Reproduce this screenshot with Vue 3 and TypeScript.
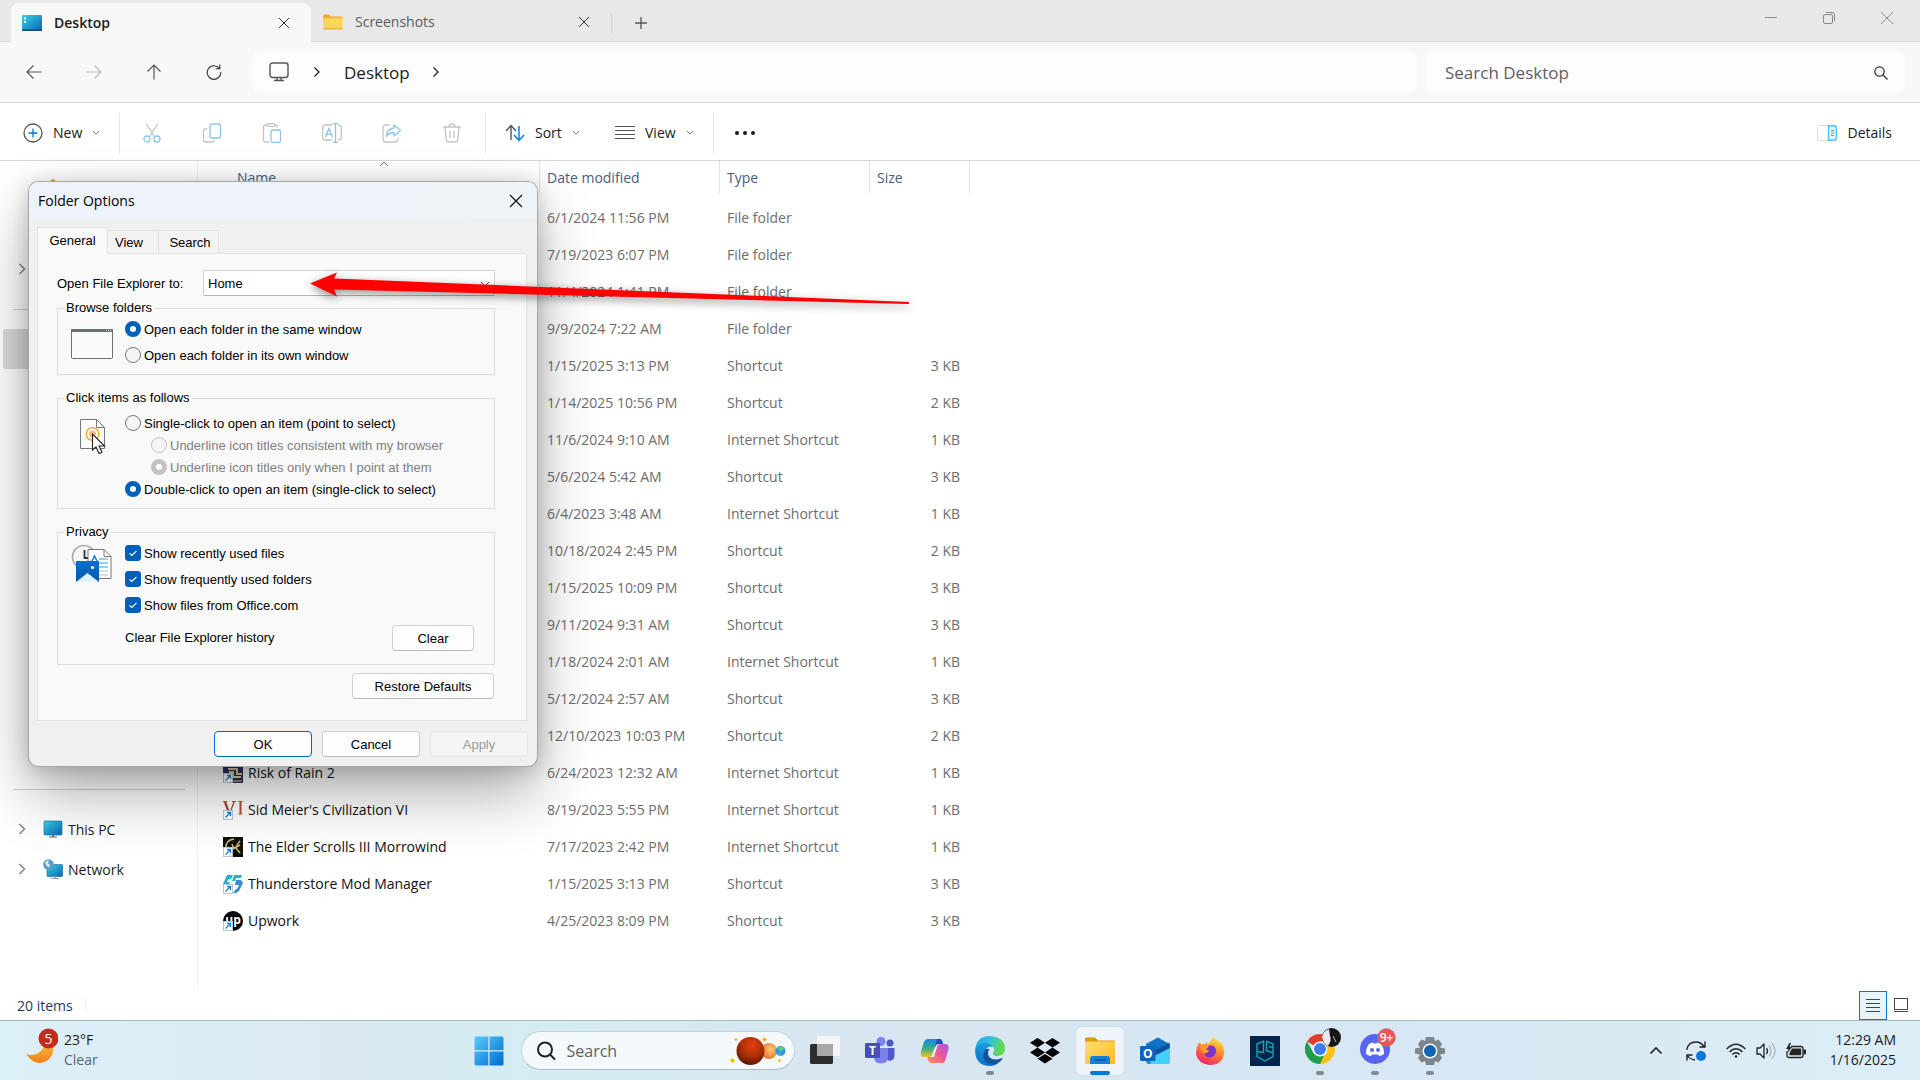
<script setup lang="ts">
import { ref } from 'vue'

interface FileRow {
  name?: string
  icon?: string
  date: string
  type: string
  size: string
}

const F = 'File folder'
const S = 'Shortcut'
const I = 'Internet Shortcut'

const rows: FileRow[] = [
  { date: '6/1/2024 11:56 PM', type: F, size: '' },
  { date: '7/19/2023 6:07 PM', type: F, size: '' },
  { date: '11/4/2024 1:41 PM', type: F, size: '' },
  { date: '9/9/2024 7:22 AM', type: F, size: '' },
  { date: '1/15/2025 3:13 PM', type: S, size: '3 KB' },
  { date: '1/14/2025 10:56 PM', type: S, size: '2 KB' },
  { date: '11/6/2024 9:10 AM', type: I, size: '1 KB' },
  { date: '5/6/2024 5:42 AM', type: S, size: '3 KB' },
  { date: '6/4/2023 3:48 AM', type: I, size: '1 KB' },
  { date: '10/18/2024 2:45 PM', type: S, size: '2 KB' },
  { date: '1/15/2025 10:09 PM', type: S, size: '3 KB' },
  { date: '9/11/2024 9:31 AM', type: S, size: '3 KB' },
  { date: '1/18/2024 2:01 AM', type: I, size: '1 KB' },
  { date: '5/12/2024 2:57 AM', type: S, size: '3 KB' },
  { date: '12/10/2023 10:03 PM', type: S, size: '2 KB' },
  { name: 'Risk of Rain 2', icon: 'ror', date: '6/24/2023 12:32 AM', type: I, size: '1 KB' },
  { name: "Sid Meier's Civilization VI", icon: 'civ', date: '8/19/2023 5:55 PM', type: I, size: '1 KB' },
  { name: 'The Elder Scrolls III Morrowind', icon: 'tes', date: '7/17/2023 2:42 PM', type: I, size: '1 KB' },
  { name: 'Thunderstore Mod Manager', icon: 'thunder', date: '1/15/2025 3:13 PM', type: S, size: '3 KB' },
  { name: 'Upwork', icon: 'upwork', date: '4/25/2023 8:09 PM', type: S, size: '3 KB' },
]

const openTo = ref('Home')
const browse = ref('same')
const click = ref('double')
const underline = ref('point')
const privacy = ref([
  { id: 'p-recent', label: 'Show recently used files', on: true },
  { id: 'p-frequent', label: 'Show frequently used folders', on: true },
  { id: 'p-office', label: 'Show files from Office.com', on: true },
])
</script>

<template>
  <div class="screen">
    <header class="tabbar">
      <div class="tab active">
        <svg class="tab-icon" width="20" height="16" viewBox="0 0 20 16">
          <defs>
            <linearGradient id="desk" x1="0" y1="0" x2="1" y2="1">
              <stop offset="0" stop-color="#35d3e3" /><stop offset="1" stop-color="#0a63b8" />
            </linearGradient>
          </defs>
          <rect width="20" height="16" rx="1" fill="url(#desk)" />
          <rect y="14.500" width="20" height="1.500" fill="#0b4a80" />
          <path d="M2 2.500h2v2H2zM2 6h2v2H2z" fill="#fff" />
        </svg>
        <span class="tab-title">Desktop</span>
        <button class="plain x" aria-label="Close tab">
          <svg width="12" height="12" viewBox="0 0 12 12"><path d="M1 1l10 10M11 1L1 11" stroke="#333" fill="none" /></svg>
        </button>
      </div>
      <div class="tab">
        <svg class="tab-icon" width="20" height="16" viewBox="0 0 20 16">
          <path d="M0 2q0-1.500 1.500-1.500h4.500L8 2.500h10.500q1 0 1 1V6H0z" fill="#f2b01c" />
          <rect y="4" width="19.500" height="11" rx="1" fill="#ffd65c" />
          <path d="M0 14h19.500v.500q0 1-1 1H1q-1 0-1-1z" fill="#eeb33a" />
        </svg>
        <span class="tab-title">Screenshots</span>
        <button class="plain x" aria-label="Close tab">
          <svg width="12" height="12" viewBox="0 0 12 12"><path d="M1 1l10 10M11 1L1 11" stroke="#333" fill="none" /></svg>
        </button>
      </div>
      <button class="plain new-tab" aria-label="New tab">
        <svg width="14" height="14" viewBox="0 0 14 14"><path d="M7 1v12M1 7h12" stroke="#555" stroke-width="1.300" /></svg>
      </button>
      <div class="win-buttons">
        <button class="plain" aria-label="Minimize"><svg width="14" height="14" viewBox="0 0 14 14"><path d="M1 6.500h12" stroke="#8a8a8a" /></svg></button>
        <button class="plain" aria-label="Restore"><svg width="14" height="14" viewBox="0 0 14 14" fill="none" stroke="#8a8a8a"><rect x="1.500" y="3.500" width="9" height="9" rx="1.500" /><path d="M4 1.500h6q2.500 0 2.500 2.500v6" /></svg></button>
        <button class="plain" aria-label="Close"><svg width="14" height="14" viewBox="0 0 14 14"><path d="M1 1l12 12M13 1L1 13" stroke="#8a8a8a" /></svg></button>
      </div>
    </header>

    <div class="navbar">
      <div class="nav-buttons">
        <button class="plain" aria-label="Back"><svg width="16" height="16" viewBox="0 0 16 16" fill="none" stroke="#555" stroke-width="1.200"><path d="M15.500 8H1M7.500 1.500L1 8l6.500 6.500" /></svg></button>
        <button class="plain" aria-label="Forward" disabled><svg width="16" height="16" viewBox="0 0 16 16" fill="none" stroke="#bbb" stroke-width="1.200"><path d="M.500 8H15M8.500 1.500L15 8l-6.500 6.500" /></svg></button>
        <button class="plain" aria-label="Up"><svg width="16" height="16" viewBox="0 0 16 16" fill="none" stroke="#555" stroke-width="1.200"><path d="M8 15.500V1M1.500 7.500L8 1l6.500 6.500" /></svg></button>
        <button class="plain" aria-label="Refresh"><svg width="16" height="16" viewBox="0 0 16 16" fill="none" stroke="#333" stroke-width="1.100"><path d="M13.500 4.500A6.800 6.800 0 1 0 14.800 8M13.800.500v4.300H9.500" /></svg></button>
      </div>
      <div class="address">
        <svg width="20" height="20" viewBox="0 0 20 20" fill="none" stroke="#555" stroke-width="1.400"><rect x="1" y="1" width="18" height="14.500" rx="2.500" /><path d="M8 15.500v3M12 15.500v3M5 18.500h10" /></svg>
        <svg class="crumb" width="8" height="12" viewBox="0 0 8 12"><path d="M1.500 1.500L6 6l-4.500 4.500" fill="none" stroke="#222" stroke-width="1.300" /></svg>
        <a class="crumb-link" href="#">Desktop</a>
        <svg width="8" height="12" viewBox="0 0 8 12"><path d="M1.500 1.500L6 6l-4.500 4.500" fill="none" stroke="#222" stroke-width="1.300" /></svg>
      </div>
      <div class="searchbox">
        <input type="text" placeholder="Search Desktop" aria-label="Search Desktop" />
        <svg width="14" height="14" viewBox="0 0 14 14" fill="none" stroke="#333" stroke-width="1.200"><circle cx="5.500" cy="5.500" r="4.700" /><path d="M9 9l4.500 4.500" /></svg>
      </div>
    </div>

    <div class="toolbar">
      <button class="plain cmd new">
        <svg width="20" height="20" viewBox="0 0 20 20" fill="none"><circle cx="10" cy="10" r="9" stroke="#555" stroke-width="1.300" /><path d="M10 5.500v9M5.500 10h9" stroke="#0078d4" stroke-width="1.300" /></svg>
        <span>New</span>
        <svg width="8" height="6" viewBox="0 0 8 6"><path d="M1 1l3 3 3-3" fill="none" stroke="#777" /></svg>
      </button>
      <div class="icon-group">
        <button class="plain" aria-label="Cut" disabled><svg width="20" height="20" viewBox="0 0 20 20" fill="none" stroke-width="1.300"><path d="M4 .500l8.500 13M16 .500L7.500 13.500" stroke="#c4c4c4" /><circle cx="5" cy="16" r="3" stroke="#8cc4ef" /><circle cx="15" cy="16" r="3" stroke="#8cc4ef" /></svg></button>
        <button class="plain" aria-label="Copy" disabled><svg width="20" height="20" viewBox="0 0 20 20" fill="none" stroke-width="1.300"><path d="M5 6H4Q1.500 6 1.500 8.500v8Q1.500 19 4 19h6q2 0 2.500-2" stroke="#c4c4c4" /><rect x="8" y="1" width="10.500" height="14" rx="2" stroke="#8cc4ef" /></svg></button>
        <button class="plain" aria-label="Paste" disabled><svg width="20" height="20" viewBox="0 0 20 20" fill="none" stroke-width="1.300"><path d="M5 2H3.500Q1.500 2 1.500 4v13q0 2 2 2H7M13 2q2.500 0 2.500 2.500" stroke="#c4c4c4" /><rect x="5" y=".700" width="8" height="2.600" rx="1.300" stroke="#c4c4c4" /><rect x="9" y="7" width="9.500" height="12.300" rx="1.500" stroke="#8cc4ef" /></svg></button>
        <button class="plain" aria-label="Rename" disabled><svg width="20" height="20" viewBox="0 0 20 20" fill="none" stroke-width="1.300"><path d="M10 2H3Q.700 2 .700 4.500v10Q.700 17 3 17h7M16 2q3.300 0 3.300 3v9q0 3-3.300 3" stroke="#c4c4c4" /><path d="M3.500 14L7 5.500 10.500 14M4.800 11.300h4.500M11 .700h5M13.500.700v18.600M11 19.300h5" stroke="#8cc4ef" /></svg></button>
        <button class="plain" aria-label="Share" disabled><svg width="20" height="20" viewBox="0 0 20 20" fill="none" stroke-width="1.300"><path d="M8 2H4Q1 2 1 5v11q0 3 3 3h9q3 0 3-3v-1" stroke="#c4c4c4" /><path d="M12 2l6.500 5.500L12 13v-3.500q-5 0-7.500 4 .500-8 7.500-8.500z" stroke="#8cc4ef" stroke-linejoin="round" /></svg></button>
        <button class="plain" aria-label="Delete" disabled><svg width="20" height="20" viewBox="0 0 20 20" fill="none" stroke="#c4c4c4" stroke-width="1.300"><path d="M1 4h18M7 4q0-3 3-3t3 3M3 4l1.300 13q.200 2 2 2h7.400q1.800 0 2-2L17 4M8 8v7M12 8v7" /></svg></button>
      </div>
      <button class="plain cmd sort">
        <svg width="20" height="18" viewBox="0 0 20 18" fill="none" stroke-width="1.400"><path d="M6 16V2M1 7l5-5.500L11 7" stroke="#555" /><path d="M14 2v14M9 11l5 5.500 5-5.500" stroke="#0078d4" /></svg>
        <span>Sort</span>
        <svg width="8" height="6" viewBox="0 0 8 6"><path d="M1 1l3 3 3-3" fill="none" stroke="#777" /></svg>
      </button>
      <button class="plain cmd view">
        <svg width="20" height="14" viewBox="0 0 20 14" stroke="#555"><path d="M0 .500h20M0 4.500h20M0 8.500h20M0 12.500h20" stroke-width="1.200" /></svg>
        <span>View</span>
        <svg width="8" height="6" viewBox="0 0 8 6"><path d="M1 1l3 3 3-3" fill="none" stroke="#777" /></svg>
      </button>
      <button class="plain more" aria-label="See more">
        <svg width="20" height="4" viewBox="0 0 20 4" fill="#1a1a1a"><circle cx="2" cy="2" r="2" /><circle cx="10" cy="2" r="2" /><circle cx="18" cy="2" r="2" /></svg>
      </button>
      <button class="plain cmd details">
        <svg width="20" height="16" viewBox="0 0 20 16" fill="none"><rect x=".500" y=".500" width="19" height="15" rx="2.500" stroke="#ddd" /><path d="M11.500.700H17q2.400 0 2.400 2.400v9.800q0 2.400-2.400 2.400h-5.500z" fill="#e3f5ff" stroke="#4cc2ff" stroke-width="1.400" /><path d="M14 5.500h3M14 8h3M14 10.500h3" stroke="#2ba7e8" /></svg>
        <span>Details</span>
      </button>
    </div>

    <main class="body">
      <nav class="sidebar">
        <div class="side-row home">
          <svg width="20" height="20" viewBox="0 0 20 20"><path d="M10 0l10 8h-3v12H3V8H0z" fill="#f08a24" /></svg>
        </div>
        <div class="side-row" />
        <div class="side-row">
          <svg class="expand" width="8" height="12" viewBox="0 0 8 12"><path d="M1.500 1L6.500 6l-5 5" fill="none" stroke="#868686" stroke-width="1.500" /></svg>
        </div>
        <div class="side-row rule" />
        <div class="side-row selected" />
        <div class="side-fill" />
        <div class="side-row rule" />
        <a class="side-row" href="#">
          <svg class="expand" width="8" height="12" viewBox="0 0 8 12"><path d="M1.500 1L6.500 6l-5 5" fill="none" stroke="#868686" stroke-width="1.500" /></svg>
          <svg width="20" height="18" viewBox="0 0 20 18">
            <rect x="1" y="1" width="18" height="14" rx="1" fill="url(#desk)" stroke="#14639b" stroke-width=".600" />
            <path d="M9 15h2v1.500h3v1H6v-1h3z" fill="#5d7180" />
          </svg>
          <span>This PC</span>
        </a>
        <a class="side-row" href="#">
          <svg class="expand" width="8" height="12" viewBox="0 0 8 12"><path d="M1.500 1L6.500 6l-5 5" fill="none" stroke="#868686" stroke-width="1.500" /></svg>
          <svg width="20" height="20" viewBox="0 0 20 20">
            <rect x="4" y="5.500" width="15.700" height="12" rx="1" fill="url(#desk)" stroke="#14639b" stroke-width=".600" />
            <path d="M11 17.500h2V19h3v1H8v-1h3z" fill="#9aa7b0" />
            <circle cx="5.500" cy="5.500" r="5.300" fill="#5c9cc4" />
            <path d="M2 3q2-2 4-1.500L5 4l2 2-1 2.500L3.500 7z" fill="#d6e9f3" />
          </svg>
          <span>Network</span>
        </a>
      </nav>
      <section class="files">
        <svg class="sort-mark" width="10" height="6" viewBox="0 0 10 6"><path d="M1 5l4-4 4 4" fill="none" stroke="#666" /></svg>
        <table>
          <colgroup><col class="c-name" /><col class="c-date" /><col class="c-type" /><col class="c-size" /></colgroup>
          <thead>
            <tr><th class="name">Name</th><th>Date modified</th><th>Type</th><th>Size</th></tr>
          </thead>
          <tbody>
            <tr v-for="(r, i) in rows" :key="i">
              <td class="name">
                <div v-if="r.name" class="file">
                  <svg width="20" height="20" viewBox="0 0 20 20">
                    <g v-if="r.icon === 'ror'">
                      <rect width="20" height="20" fill="#2f2f5c" />
                      <path d="M5 6h9v5h5M10 10v4h8M6 9h5" stroke="#d9cf9a" stroke-width="2" fill="none" />
                      <path d="M10 18h9" stroke="#d9cf9a" fill="none" />
                    </g>
                    <g v-else-if="r.icon === 'civ'" fill="none" stroke="#a5532f">
                      <path d="M2 2l4.500 12" stroke-width="2.400" /><path d="M6.500 14L11 2" stroke-width="1.300" /><path d="M17.500 2v12" stroke-width="2" />
                      <path d="M0 1.500h4M9 1.500h4M15.500 1.500h4M15.500 14h4" />
                    </g>
                    <g v-else-if="r.icon === 'tes'">
                      <rect width="20" height="20" fill="#120e08" />
                      <path d="M11 2Q2 3 3 12M9 7q1 4 4 4M17 4q-3 3-4 7l4 5M10 12l7-4" fill="none" stroke="#d2ba78" stroke-width="1.500" />
                    </g>
                    <g v-else-if="r.icon === 'thunder'">
                      <path d="M4 1h6L8 5H5.500L4 8h3l-1 2H0zM11 1h8l-1 3h-5l-1 3h-3z" fill="#22b4cc" />
                      <path d="M13 6h5l2 3-4 8-3 2h-3l3-4h1l2-4h-4z" fill="#3590c8" />
                    </g>
                    <g v-else>
                      <circle cx="10" cy="10" r="10" fill="#000" />
                      <text x="10" y="13" text-anchor="middle" font-size="12" font-weight="700" fill="#fff" font-family="Open Sans, sans-serif">up</text>
                    </g>
                    <rect x=".500" y="10.500" width="9" height="9" fill="#fff" stroke="#b9c7dc" />
                    <path d="M2.500 17.500l5-5M4 12.500h3.500V16" fill="none" stroke="#1a7fd0" stroke-width="1.300" />
                  </svg>
                  <span>{{ r.name }}</span>
                </div>
              </td>
              <td>{{ r.date }}</td>
              <td>{{ r.type }}</td>
              <td class="size">{{ r.size }}</td>
            </tr>
          </tbody>
        </table>
      </section>
    </main>

    <div class="statusbar">
      <span class="count">20 items</span>
      <div class="view-toggle">
        <button class="plain on" aria-label="Details view"><svg width="14" height="14" viewBox="0 0 14 14" stroke="#444"><path d="M0 1.500h14M0 5.500h14M0 9.500h14M0 13.500h14" /></svg></button>
        <button class="plain" aria-label="Large icons"><svg width="14" height="14" viewBox="0 0 14 14" stroke="#444" fill="none"><rect x=".500" y=".500" width="13" height="11" /><path d="M0 13.500h14" /></svg></button>
      </div>
    </div>

    <footer class="taskbar">
      <div class="weather">
        <svg width="32" height="38" viewBox="0 0 32 38">
          <defs><linearGradient id="moon" x1="0" y1="0" x2="0" y2="1"><stop offset="0" stop-color="#f9bf3c" /><stop offset="1" stop-color="#ef7d18" /></linearGradient></defs>
          <path d="M0 26q14 4 19-10h8q2 10-5 16-12 8-22-6z" fill="url(#moon)" />
          <circle cx="22.500" cy="10.500" r="10" fill="#c42b1c" />
          <text x="22.500" y="15.500" text-anchor="middle" font-size="14" fill="#fff" font-family="Open Sans, sans-serif">5</text>
        </svg>
        <div class="two-lines"><span>23°F</span><span class="dim">Clear</span></div>
      </div>

      <div class="center">
        <button class="plain start" aria-label="Start">
          <svg width="30" height="30" viewBox="0 0 30 30">
            <defs><linearGradient id="win" x1="0" y1="0" x2="1" y2="1"><stop offset="0" stop-color="#57cdfb" /><stop offset="1" stop-color="#0069cf" /></linearGradient></defs>
            <path d="M2 .500h12.300v13.800H.500V2Q.500.500 2 .500zM15.500.500H28Q29.500.500 29.500 2v12.300h-14zM.500 15.500h13.800v14H2q-1.500 0-1.500-1.500zM15.500 15.500h14V28q0 1.500-1.500 1.500H15.500z" fill="url(#win)" />
          </svg>
        </button>
        <div class="task-search">
          <svg width="20" height="20" viewBox="0 0 20 20" fill="none" stroke="#222" stroke-width="2"><circle cx="9" cy="8.500" r="7" /><path d="M14 13.500l4.500 4.500" stroke-linecap="round" /></svg>
          <input type="text" placeholder="Search" aria-label="Search" />
          <svg width="56" height="30" viewBox="0 0 56 30">
            <defs>
              <radialGradient id="mars" cx=".550" cy=".300" r=".700"><stop offset="0" stop-color="#e2420b" /><stop offset=".600" stop-color="#a92d06" /><stop offset="1" stop-color="#5b1402" /></radialGradient>
              <radialGradient id="venus" cx=".600" cy=".400" r=".600"><stop offset="0" stop-color="#ffc976" /><stop offset="1" stop-color="#e2782e" /></radialGradient>
            </defs>
            <circle cx="39" cy="15" r="8" fill="url(#venus)" />
            <circle cx="50.500" cy="15" r="5" fill="#2f97e6" />
            <path d="M49 10.500q4 0 5 2l-3 3-3-2zM48 17l3 1-1 2z" fill="#5fcf73" />
            <circle cx="20.500" cy="15" r="14" fill="url(#mars)" />
            <path d="M34.500 1l.800 1.700 1.700.800-1.700.800-.800 1.700-.800-1.700-1.700-.800 1.700-.800zM2.500 22l.900 1.600 1.600.900-1.600.900-.900 1.600-.900-1.600L0 24.500l1.600-.900zM6 2l.500 1 1 .500-1 .500L6 5l-.500-1-1-.500 1-.500zM49.500 23l.500 1 1 .500-1 .500-.500 1-.500-1-1-.500 1-.500z" fill="#f1b51c" stroke="#f1b51c" stroke-width=".600" />
          </svg>
        </div>

        <button class="app" aria-label="Task view">
          <svg width="30" height="30" viewBox="0 0 30 30">
            <rect x="0" y="8" width="23" height="20" rx="1.500" fill="#2d2d2d" />
            <rect x="7" y="0" width="23" height="20" rx="1.500" fill="#f5f5f5" />
            <path d="M7 8h16v12H8.500Q7 20 7 18.500z" fill="#a8a8a8" />
          </svg>
        </button>
        <button class="app" aria-label="Teams">
          <svg width="30" height="30" viewBox="0 0 30 30">
            <circle cx="25" cy="7" r="3.500" fill="#5059c9" /><path d="M20 12h9.500v7.500a4.500 4.500 0 0 1-9.500 1z" fill="#5059c9" />
            <circle cx="16" cy="5.500" r="4.500" fill="#7b83eb" /><path d="M9 12h14v9q0 6.500-7 6.500T9 21z" fill="#7b83eb" />
            <rect x="0" y="7" width="15" height="15" rx="1.200" fill="#464eb8" />
            <text x="7.500" y="19" text-anchor="middle" font-size="12" font-weight="700" fill="#fff" font-family="Open Sans, sans-serif">T</text>
          </svg>
        </button>
        <button class="app" aria-label="Copilot">
          <svg width="30" height="30" viewBox="0 0 30 30">
            <defs>
              <linearGradient id="cpa" x1="0" y1="0" x2="0" y2="1"><stop offset="0" stop-color="#1888e0" /><stop offset=".500" stop-color="#2fae8d" /><stop offset="1" stop-color="#f2c21c" /></linearGradient>
              <linearGradient id="cpb" x1="1" y1="0" x2="0" y2="1"><stop offset="0" stop-color="#a65af0" /><stop offset=".500" stop-color="#f05694" /><stop offset="1" stop-color="#ff9456" /></linearGradient>
            </defs>
            <path d="M8 3h11q3 0 4 5h-5q-2 0-3 4l-2 6q-1 3-3 3H4q-4 0-3-5L3.500 7Q5 3 8 3z" fill="url(#cpa)" />
            <path d="M17 3h3q2 0 3 5h-5q-2 0-3 3z" fill="#1a4ec2" />
            <path d="M22 27H12q-4 0-4.500-6H12q2 0 3-4l2-6q1-3 4-3h4q4.500 0 3.500 5L26 22q-1 5-4 5z" fill="url(#cpb)" />
            <path d="M15 11h2l-3 10h-3z" fill="#dcebf4" />
          </svg>
        </button>
        <button class="app open" aria-label="Edge">
          <svg width="30" height="30" viewBox="0 0 30 30">
            <defs>
              <linearGradient id="eda" x1="0" y1="0" x2="1" y2=".300"><stop offset="0" stop-color="#1ba0dd" /><stop offset=".500" stop-color="#2fc2df" /><stop offset="1" stop-color="#66d84b" /></linearGradient>
              <linearGradient id="edb" x1="0" y1="0" x2="0" y2="1"><stop offset="0" stop-color="#1c9be0" /><stop offset="1" stop-color="#0a6ec9" /></linearGradient>
            </defs>
            <path d="M0 15Q1 0 15 0q14 1 15 12 0 8-8 8-5-.500-4-3 3-4-1-7-8-5-17 5z" fill="url(#eda)" />
            <path d="M0 15Q2 7 9 7q7 0 9 4-7-2-8 6 1 9 13 10-3 3-8 3Q1 30 0 15z" fill="url(#edb)" />
            <path d="M10.500 13q-5 9 2 14 9 4 15-4 .500-1.500-1-.800-8 3-12-1-3-4 0-8.200z" fill="#11539f" />
          </svg>
        </button>
        <button class="app" aria-label="Dropbox">
          <svg width="30" height="26" viewBox="0 0 30 26"><path d="M7.500 0L15 4.800 7.500 9.600 0 4.800zM22.500 0L30 4.800 22.500 9.600 15 4.800zM7.500 9.600L15 14.400 7.500 19.200 0 14.400zM22.500 9.600L30 14.400 22.500 19.200 15 14.400zM15 16l7.500 4.800L15 25.600 7.500 20.800z" fill="#000" /></svg>
        </button>
        <button class="app current" aria-label="File Explorer">
          <svg width="30" height="28" viewBox="0 0 30 28">
            <defs><linearGradient id="fold" x1="0" y1="0" x2="1" y2="1"><stop offset="0" stop-color="#ffdf74" /><stop offset="1" stop-color="#fbb91b" /></linearGradient></defs>
            <path d="M0 2q0-1.500 1.500-1.500H10l3 3h15.500q1.500 0 1.500 1.500v5H0z" fill="#dd9b07" />
            <rect y="4.500" width="30" height="22.500" rx="1" fill="url(#fold)" />
            <path d="M5 27v-5q0-3 3-3h14q3 0 3 3v5z" fill="#1481d8" /><path d="M9 23h12" stroke="#0b4f91" stroke-width="1.300" />
          </svg>
        </button>
        <button class="app" aria-label="Outlook">
          <svg width="30" height="28" viewBox="0 0 30 28">
            <path d="M6 7l12-6 12 6v17q0 3-3 3H9q-3 0-3-3z" fill="#1b8fdc" />
            <path d="M6 7l12-6.500L27 6 12 16z" fill="#1072c4" /><path d="M14 14L29.500 5.500v6L16 20z" fill="#0c4ea2" />
            <path d="M12 20l18-9v13q0 3-3 3H10z" fill="#43d1f5" />
            <rect y="9" width="15.500" height="15" rx="1.200" fill="#0f64bd" />
            <text x="7.700" y="21" text-anchor="middle" font-size="12" font-weight="700" fill="#fff" font-family="Open Sans, sans-serif">O</text>
          </svg>
        </button>
        <button class="app" aria-label="Firefox">
          <svg width="30" height="30" viewBox="0 0 30 30">
            <defs><linearGradient id="ff" x1=".800" y1="0" x2=".300" y2="1"><stop offset="0" stop-color="#fff24a" /><stop offset=".450" stop-color="#ff8a2a" /><stop offset="1" stop-color="#f01f6d" /></linearGradient></defs>
            <path d="M18 1q6 4 7 6l.500-1.500Q30 11 29 18q-2 11-14 11Q3 28 1 18q0-8 4-12l1 3q2-1 4-1l2-3 .500 4q4-4 5.500-8z" fill="url(#ff)" />
            <path d="M11 11q8-4 10 3 0 7-6 7.500-5 0-6-5 3 1 5-1-4-1-3-4.500z" fill="#7a35c8" />
            <path d="M5 11q4-3 9-.500l-3 3q3 .500 3 2-3 2-5 2-2-1-4-6.500z" fill="#ff9a2a" />
          </svg>
        </button>
        <button class="app" aria-label="PG">
          <svg width="30" height="30" viewBox="0 0 30 30"><rect width="30" height="30" fill="#03234a" /><g fill="none" stroke="#16a6ae" stroke-width="1.400"><path d="M13.500 14.500V5L7 8v11M7 15.500l6.500 1V9M16.500 5l6.500 3v12.500L15 25l-8-4.500V18M16.500 5v9.500L23 17M19 11h4" /></g></svg>
        </button>
        <button class="app open" aria-label="Chrome">
          <svg class="tall" width="38" height="38" viewBox="0 0 38 38">
            <path d="M15 21L2 13.500A15 15 0 0 1 28 13.500H15z" fill="#e33b2e" />
            <path d="M15 21l0-7.500h13A15 15 0 0 1 15 36z" fill="#fbc116" />
            <path d="M15 36A15 15 0 0 1 2 13.500L8.500 25l6.500 3.500 4-1z" fill="#1f9d49" />
            <circle cx="15" cy="21" r="7.500" fill="#fff" /><circle cx="15" cy="21" r="6" fill="#3b7ded" />
            <circle cx="26.500" cy="9.500" r="9.500" fill="#161616" /><path d="M24 1q-6 2-7 8 1 7 6 9 4-6 2-10z" fill="#e8e8e8" /><path d="M28 8l3 6" stroke="#bbb" />
          </svg>
        </button>
        <button class="app open" aria-label="Discord">
          <svg class="tall" width="38" height="38" viewBox="0 0 38 38">
            <circle cx="15" cy="21" r="15" fill="#5865f2" />
            <path d="M9 16q3-2 4-1.500l.500 1h3l.500-1q1-.500 4 1.500 3.500 5 3 10-3 2-5 2l-1-1.500h-6L11 28q-2 0-5-2-.500-5 3-10z" fill="#fff" />
            <circle cx="12" cy="22" r="2" fill="#5865f2" /><circle cx="18" cy="22" r="2" fill="#5865f2" />
            <circle cx="26.500" cy="9.500" r="9" fill="#ea5555" stroke="#b58080" stroke-width=".500" />
            <text x="26.500" y="14" text-anchor="middle" font-size="12" font-weight="600" fill="#fff" font-family="Open Sans, sans-serif">9+</text>
          </svg>
        </button>
        <button class="app open" aria-label="Settings">
          <svg width="30" height="30" viewBox="0 0 30 30">
            <path d="M11 1h8l1 4 3.500-1.500L27 8l-2 3.500 5 1v5l-5 1L27 22l-3.500 4.500L20 25l-1 4h-8l-1-4-3.500 1.500L3 22l2-3.500-5-1v-5l5-1L3 8l3.500-4.500L10 5z" fill="#7c848c" />
            <circle cx="15" cy="15" r="7.500" fill="#fff" /><circle cx="15" cy="15" r="6" fill="#1065b5" />
          </svg>
        </button>
      </div>

      <div class="tray">
        <svg width="14" height="9" viewBox="0 0 14 9"><path d="M1.500 7.500L7 2l5.500 5.500" fill="none" stroke="#222" stroke-width="1.600" /></svg>
        <svg class="sync" width="20" height="20" viewBox="0 0 20 20" fill="none" stroke="#222" stroke-width="1.400"><path d="M.700 9Q2 1 10 1q5 0 8.500 5M19 .500V6h-5.500M1 19.500V14h5.500M1.500 14.500Q4 18.500 9 19" /><circle cx="15" cy="15" r="5" fill="#0a78d8" stroke="none" /></svg>
        <svg class="wifi" width="20" height="15" viewBox="0 0 20 15" fill="none" stroke="#222" stroke-width="1.500"><path d="M.700 6Q10-3.500 19.300 6M3.500 9Q10 2.500 16.500 9M6.300 11.500q3.700-3.500 7.400 0" /><circle cx="10" cy="13.500" r="1.200" fill="#222" stroke="none" /></svg>
        <svg class="sound" width="20" height="18" viewBox="0 0 20 18" fill="none" stroke="#222" stroke-width="1.300"><path d="M1 6v6h3l4 4V2L4 6z" stroke-linejoin="round" /><path d="M10.500 6q2 3 0 6" /><path d="M13 3.500q4 5.500 0 11M16 1.500q6 7.500 0 15" stroke="#aab4bb" /></svg>
        <svg class="battery" width="20" height="16" viewBox="0 0 20 16"><path d="M5 3.500h10q2 0 2 2v7q0 2-2 2H3q-2 0-2-2V8" fill="none" stroke="#222" stroke-width="1.300" /><path d="M6 5.500h8.500q.700 0 .700.700v6H3.500V10zM17.500 6.500H19q1 0 1 1v3q0 1-1 1h-1.500z" fill="#222" /><path d="M3.500 0L0 6h2.500L1.500 10 6 4H3.500L5 0z" fill="#222" /></svg>
        <div class="two-lines clock"><span>12:29 AM</span><span>1/16/2025</span></div>
      </div>
    </footer>

    <form class="dialog" role="dialog" aria-label="Folder Options" @submit.prevent>
      <div class="dlg-title">
        <span>Folder Options</span>
        <button type="button" class="plain" aria-label="Close"><svg width="14" height="14" viewBox="0 0 14 14"><path d="M1 1l12 12M13 1L1 13" stroke="#111" stroke-width="1.200" /></svg></button>
      </div>
      <div class="dlg-tabs" role="tablist">
        <button type="button" role="tab" class="dlg-tab active">General</button>
        <button type="button" role="tab" class="dlg-tab t-view">View</button>
        <button type="button" role="tab" class="dlg-tab t-search">Search</button>
      </div>
      <div class="page">
        <div class="open-row">
          <label for="open-to">Open File Explorer to:</label>
          <div class="select-wrap">
            <select id="open-to" v-model="openTo"><option>Home</option></select>
            <svg width="10" height="6" viewBox="0 0 10 6"><path d="M1 1l4 4 4-4" fill="none" stroke="#555" /></svg>
          </div>
        </div>

        <fieldset class="g-browse">
          <legend>Browse folders</legend>
          <div class="group">
            <svg width="42" height="32" viewBox="0 0 42 32"><rect x=".500" y="1.500" width="41" height="29" rx="1" fill="#fafafa" stroke="#6c706c" /><path d="M0 1h42v3H0z" fill="#6c706c" /><path d="M35 2.500h5" stroke="#ddd" stroke-dasharray="1 1" /></svg>
            <div>
              <label class="opt"><input v-model="browse" type="radio" name="browse" value="same" /><span>Open each folder in the same window</span></label>
              <label class="opt"><input v-model="browse" type="radio" name="browse" value="own" /><span>Open each folder in its own window</span></label>
            </div>
          </div>
        </fieldset>

        <fieldset class="g-click">
          <legend>Click items as follows</legend>
          <div class="group">
            <svg class="doc" width="26" height="36" viewBox="0 0 26 36">
              <path d="M.500.500h16l8 8v21H.500z" fill="#fcfcfc" stroke="#777" /><path d="M16.500.500v8h8" fill="none" stroke="#777" />
              <circle cx="12.500" cy="15" r="6.300" fill="none" stroke="#f0a030" stroke-width="1.300" /><circle cx="12.500" cy="15" r="3.500" fill="#f7bd7a" />
              <path d="M12.500 15v16l3.500-3 3 6.500 3-1.300-3-6.200h5.500z" fill="#fff" stroke="#222" stroke-width="1.100" />
            </svg>
            <div>
              <label class="opt"><input v-model="click" type="radio" name="click" value="single" /><span>Single-click to open an item (point to select)</span></label>
              <label class="opt sub"><input v-model="underline" type="radio" name="underline" value="browser" disabled /><span>Underline icon titles consistent with my browser</span></label>
              <label class="opt sub"><input v-model="underline" type="radio" name="underline" value="point" disabled /><span>Underline icon titles only when I point at them</span></label>
              <label class="opt"><input v-model="click" type="radio" name="click" value="double" /><span>Double-click to open an item (single-click to select)</span></label>
            </div>
          </div>
        </fieldset>

        <fieldset class="g-privacy">
          <legend>Privacy</legend>
          <div class="group">
            <svg width="42" height="40" viewBox="0 0 42 40">
              <defs><linearGradient id="pic" x1="0" y1="0" x2="0" y2="1"><stop offset="0" stop-color="#0a6fce" /><stop offset="1" stop-color="#0857a6" /></linearGradient></defs>
              <circle cx="13" cy="13" r="11.500" fill="#f7f7f7" stroke="#aaa" stroke-width="1.600" /><path d="M13.500 6v8H18" fill="none" stroke="#333" stroke-width="1.800" />
              <path d="M17 5.500h16l7 7v22H17z" fill="#fff" stroke="#777" /><path d="M33 5.500v7h7" fill="none" stroke="#777" />
              <path d="M28 15h9M28 19h9M28 23h9" stroke="#2f9be0" /><path d="M28 27h9M28 31h9" stroke="#bbb" />
              <path d="M20.500 18l3-6 3 6" fill="none" stroke="#1b82d2" stroke-width="1.600" />
              <rect x="5" y="17" width="23" height="21" fill="url(#pic)" /><circle cx="21.500" cy="23.500" r="1.600" fill="#fff" /><path d="M5 38l11.500-9L28 38z" fill="#dff0ff" />
            </svg>
            <div>
              <label v-for="p in privacy" :key="p.id" class="opt" :for="p.id">
                <span class="check"><input :id="p.id" v-model="p.on" type="checkbox" /><svg width="16" height="16" viewBox="0 0 16 16"><path d="M4.500 8.300l2.300 2.200 4.700-4.700" fill="none" stroke="#fff" stroke-width="1.100" /></svg></span>
                <span>{{ p.label }}</span>
              </label>
              <div class="history"><span>Clear File Explorer history</span><button type="button" class="btn clear">Clear</button></div>
            </div>
          </div>
        </fieldset>
        <button type="button" class="btn restore">Restore Defaults</button>
      </div>
      <div class="dlg-actions">
        <button type="submit" class="btn ok">OK</button>
        <button type="button" class="btn">Cancel</button>
        <button type="button" class="btn" disabled>Apply</button>
      </div>
    </form>

    <svg class="arrow" width="620" height="60" viewBox="0 0 620 60" aria-hidden="true">
      <path d="M10 23.500L37 12.500 34 18.500 609 42v2L34 29.500 37 36.500z" fill="#f00" />
    </svg>
  </div>
</template>

<style>
body {
  margin: 0;
}
</style>

<style scoped>
* {
  box-sizing: border-box;
}
.screen {
  position: relative;
  display: flex;
  flex-direction: column;
  min-height: 100vh;
  overflow: hidden;
  background: #fff;
  color: #1b1b1b;
  font: 14px/20px 'Open Sans', 'Noto Sans', sans-serif;
}
svg {
  display: block;
  flex: none;
}
a {
  color: inherit;
  text-decoration: none;
}
button,
input,
select {
  font: inherit;
  color: inherit;
}
.plain {
  display: flex;
  align-items: center;
  justify-content: center;
  padding: 0;
  border: 0;
  background: none;
}

/* Tabs */
.tabbar {
  display: flex;
  height: 42px;
  padding: 3px 4px 0 11px;
  background: #e8e8e8;
  border-bottom: 1px solid #d8d8d8;
}
.tab {
  display: flex;
  align-items: center;
  width: 300px;
  height: 38px;
  padding: 0 21px 0 12px;
  color: #5c5c5c;
}
.tab.active {
  height: 39px;
  padding-left: 11px;
  border-radius: 8px 8px 0 0;
  background: #f8f8f8;
  color: #1b1b1b;
}
.tab-title {
  flex: 1;
  margin-left: 12px;
}
.active .tab-title {
  font-weight: 600;
}
.new-tab {
  width: 58px;
  height: 20px;
  margin-top: 10px;
  border-left: 1px solid #d0d0d0;
}
.win-buttons {
  display: flex;
  align-items: center;
  height: 30px;
  margin-left: auto;
}
.win-buttons button {
  width: 58px;
}

/* Navigation */
.navbar {
  display: flex;
  align-items: center;
  height: 61px;
  padding: 0 15px 0 4px;
  background: #f8f8f8;
  border-bottom: 1px solid #d6d6d6;
}
.nav-buttons {
  display: flex;
  width: 248px;
}
.nav-buttons button {
  width: 60px;
  height: 40px;
}
.address {
  display: flex;
  flex: 1;
  align-items: center;
  height: 40px;
  padding-left: 17px;
  border-radius: 6px;
  background: #fdfdfd;
  font-size: 17px;
}
.crumb {
  margin: 0 23px 0 24px;
}
.crumb-link {
  margin-right: 22px;
  padding-top: 1px;
}
.searchbox {
  display: flex;
  align-items: center;
  width: 478px;
  height: 40px;
  margin-left: 10px;
  padding: 1px 17px 0 18px;
  border-radius: 6px;
  background: #fdfdfd;
  font-size: 17px;
}
input[type='text'] {
  flex: 1;
  min-width: 0;
  padding: 0;
  border: 0;
  outline: 0;
  background: none;
}
input::placeholder {
  color: #606060;
  opacity: 1;
}

/* Command bar */
.toolbar {
  display: flex;
  align-items: center;
  height: 58px;
  padding-top: 2px;
  border-bottom: 1px solid #d6d6d6;
}
.toolbar button {
  height: 40px;
}
.toolbar .cmd {
  justify-content: flex-start;
  gap: 10px;
}
.toolbar .new {
  width: 120px;
  padding-left: 23px;
  border-right: 1px solid #e6e6e6;
}
.icon-group {
  display: flex;
  padding: 0 3px 0 2px;
  border-right: 1px solid #e6e6e6;
}
.icon-group button {
  width: 60px;
}
.toolbar .sort {
  width: 110px;
  padding-left: 19px;
}
.toolbar .view {
  width: 118px;
  padding-left: 19px;
  border-right: 1px solid #e6e6e6;
}
.toolbar .more {
  width: 61px;
}
.toolbar .details {
  margin-left: auto;
  padding-right: 28px;
}

/* Body */
.body {
  display: flex;
  flex: 1;
}
.sidebar {
  display: flex;
  flex-direction: column;
  width: 198px;
  padding-top: 8px;
  border-right: 1px solid #f1f1f1;
}
.side-row {
  display: flex;
  align-items: center;
  height: 40px;
  padding-left: 43px;
  gap: 5px;
}
.side-row span {
  padding-top: 1px;
}
.side-row.home {
  padding-bottom: 1px;
}
.side-row .expand {
  margin: 0 12px 0 -25px;
}
.side-row.rule::before {
  content: '';
  width: 172px;
  height: 1px;
  margin-left: -30px;
  background: #cfcfcf;
}
.side-row.selected {
  margin: 0 8px 0 3px;
  border-radius: 3px;
  background: #d9d9d9;
}
.side-fill {
  height: 400px;
}
.files {
  position: relative;
  flex: 1;
}
.sort-mark {
  position: absolute;
  top: 0;
  left: 181px;
}
table {
  width: 772px;
  table-layout: fixed;
  border-collapse: separate;
  border-spacing: 0;
}
.c-name {
  width: 342px;
}
.c-date {
  width: 180px;
}
.c-type {
  width: 150px;
}
.c-size {
  width: 100px;
}
th {
  height: 32px;
  padding: 2px 0 0 7px;
  border-right: 1px solid #e2e2e2;
  color: #44607f;
  font-weight: 400;
  text-align: left;
}
th.name {
  padding-left: 39px;
}
tbody::before {
  content: '';
  display: block;
  height: 6px;
}
td {
  height: 37px;
  padding: 0 0 0 7px;
  color: #6d6d6d;
}
td.size {
  padding-right: 10px;
  text-align: right;
}
td.name {
  padding-left: 25px;
  color: #111;
}
.file {
  display: flex;
  align-items: center;
  gap: 5px;
}
.statusbar {
  display: flex;
  align-items: center;
  justify-content: space-between;
  height: 30px;
  padding: 0 5px 0 17px;
  color: #1e3a5f;
}
.count {
  padding: 1px 12px 0 0;
  border-right: 1px solid #f0f0f0;
  line-height: 14px;
}
.view-toggle {
  display: flex;
}
.view-toggle button {
  width: 28px;
  height: 29px;
}
.view-toggle .on {
  border: 1px solid #0078d4;
  background: #e5f3fb;
}

/* Taskbar */
.taskbar {
  display: flex;
  align-items: center;
  justify-content: space-between;
  height: 60px;
  padding: 0 24px 0 26px;
  border-top: 1px solid #a9b7c1;
  background: linear-gradient(90deg, #dcf0f8, #dbe9f5 18%, #d4edf3 28%, #d7e6f1 42%, #d7e7f3 75%, #dceef7);
}
.weather {
  display: flex;
  flex: 1;
  align-items: center;
  gap: 6px;
}
.weather svg {
  margin-bottom: 8px;
}
.two-lines {
  display: flex;
  flex-direction: column;
  padding-bottom: 2px;
}
.dim {
  color: #5c6670;
}
.center {
  display: flex;
  align-items: center;
  margin-left: 8px;
}
.start {
  width: 30px;
  margin-right: 17px;
}
.task-search {
  display: flex;
  align-items: center;
  width: 274px;
  height: 39px;
  margin-right: 2px;
  padding: 0 8px 0 14px;
  gap: 11px;
  border: 1px solid #c3d3dc;
  border-bottom-color: #a9bac5;
  border-radius: 20px;
  background: #f4f9fc;
  font-size: 16px;
}
.app {
  position: relative;
  display: flex;
  align-items: center;
  justify-content: center;
  width: 48px;
  height: 48px;
  margin: 0 3px 0 4px;
  padding: 0;
  border: 0;
  border-radius: 6px;
  background: none;
}
.app .tall {
  margin: -8px -8px 0 0;
}
.app.current {
  background: #eef4fb;
  box-shadow: 0 0 1px 1px #d2dfea;
}
.app.open::after,
.app.current::after {
  content: '';
  position: absolute;
  bottom: 0;
  left: 20px;
  width: 8px;
  height: 4px;
  border-radius: 2px;
  background: #83898f;
}
.app.current::after {
  left: 14px;
  width: 20px;
  background: #0078d4;
}
.tray {
  display: flex;
  flex: 1;
  align-items: center;
  justify-content: flex-end;
}
.sync {
  margin: 0 20px 0 23px;
}
.sound {
  margin: 0 10px;
}
.clock {
  width: 90px;
  text-align: right;
}

/* Folder Options */
.dialog {
  position: absolute;
  top: 182px;
  left: 29px;
  width: 508px;
  border-radius: 9px;
  background: #f0f0f0;
  box-shadow: 0 0 0 1px #a8a8a8, 0 2px 21px rgba(0, 0, 0, 0.2), 0 28px 60px rgba(0, 0, 0, 0.32);
  color: #000;
  font: 13px/16px 'Liberation Sans', Arial, sans-serif;
}
.dlg-title {
  display: flex;
  align-items: center;
  justify-content: space-between;
  height: 37px;
  padding: 0 14px 0 9px;
  border-radius: 9px 9px 0 0;
  background: linear-gradient(90deg, #edf2fb, #eff4f9);
  font: 14px/20px 'Open Sans', 'Noto Sans', sans-serif;
}
.dlg-tabs {
  display: flex;
  align-items: flex-end;
  height: 34px;
  padding-left: 8px;
}
.dlg-tab {
  height: 23px;
  padding: 2px 0 0;
  border: 1px solid #e2e2e2;
  border-width: 1px 1px 0 0;
  background: #f3f3f3;
}
.dlg-tab.active {
  position: relative;
  width: 71px;
  height: 27px;
  margin-bottom: -1px;
  padding: 0;
  border-left-width: 1px;
  background: #f9f9f9;
}
.t-view {
  width: 51px;
  padding-right: 8px;
}
.t-search {
  width: 60px;
  padding-left: 3px;
}
.page {
  display: flex;
  flex-direction: column;
  margin: 0 10px 0 8px;
  padding: 16px 31px 21px 19px;
  border: 1px solid #e2e2e2;
  background: #f9f9f9;
}
.open-row {
  display: flex;
  align-items: center;
  justify-content: space-between;
  margin-bottom: 4px;
}
.open-row label {
  padding-top: 2px;
}
.select-wrap {
  position: relative;
  width: 292px;
}
select {
  width: 100%;
  height: 26px;
  padding: 1px 4px 0;
  border: 1px solid #cfcfcf;
  border-bottom-color: #b5b5b5;
  border-radius: 2px;
  background: #fff;
  appearance: none;
}
.select-wrap svg {
  position: absolute;
  top: 11px;
  right: 5px;
}
fieldset {
  min-width: 0;
  margin: 0 0 15px;
  padding: 0;
  border: 1px solid #dcdcdc;
}
legend {
  margin-left: 6px;
  padding: 0 2px;
}
.group {
  display: grid;
  grid-template-columns: 54px 1fr;
  padding-left: 13px;
}
.g-browse .group {
  padding-bottom: 6px;
}
.g-browse svg {
  margin-top: 12px;
}
.g-click .group {
  padding-top: 6px;
  padding-bottom: 8px;
}
.g-click .opt {
  height: 22px;
}
.doc {
  margin: 7px 0 0 9px;
}
.g-privacy {
  margin-bottom: 8px;
}
.g-privacy .group {
  padding-bottom: 13px;
}
.group > svg {
  align-self: start;
}
.g-privacy .group > svg {
  margin-top: 4px;
}
.opt {
  display: flex;
  align-items: center;
  height: 26px;
  gap: 3px;
  white-space: nowrap;
}
.opt > span:last-child {
  padding-top: 1px;
}
.opt.sub {
  margin-left: 26px;
  color: #7f7f7f;
}
input[type='radio'],
input[type='checkbox'] {
  width: 16px;
  height: 16px;
  margin: 0;
  appearance: none;
}
input[type='radio'] {
  border: 1px solid #767676;
  border-radius: 50%;
  background: #f5f5f5;
}
input[type='radio']:checked {
  border: 5px solid #005fb8;
  background: #fff;
}
input[type='radio']:disabled {
  border-color: #c3c3c3;
}
.check {
  position: relative;
  height: 16px;
}
.check svg {
  position: absolute;
  inset: 0;
  pointer-events: none;
}
input[type='checkbox'] {
  display: block;
  border: 1px solid #767676;
  border-radius: 3px;
}
input[type='checkbox']:checked {
  border-color: #005fb8;
  background: #005fb8;
}
.history {
  display: flex;
  align-items: center;
  justify-content: space-between;
  margin-top: 7px;
  padding-right: 20px;
}
.btn {
  width: 98px;
  height: 26px;
  padding: 1px 0 0;
  border: 1px solid #d0d0d0;
  border-bottom-color: #b8b8b8;
  border-radius: 4px;
  background: #fdfdfd;
}
.btn.clear {
  width: 82px;
}
.btn.restore {
  align-self: flex-end;
  width: 142px;
  margin-right: 1px;
}
.btn.ok {
  border-color: #0067c0;
}
.btn:disabled {
  border-color: #e6e6e6;
  background: #f5f5f5;
  color: #9a9a9a;
}
.dlg-actions {
  display: flex;
  justify-content: flex-end;
  gap: 10px;
  padding: 10px 9px 9px;
}
.arrow {
  position: absolute;
  top: 260px;
  left: 300px;
  filter: drop-shadow(0 3px 5px rgba(0, 0, 0, 0.45));
  pointer-events: none;
}
</style>
